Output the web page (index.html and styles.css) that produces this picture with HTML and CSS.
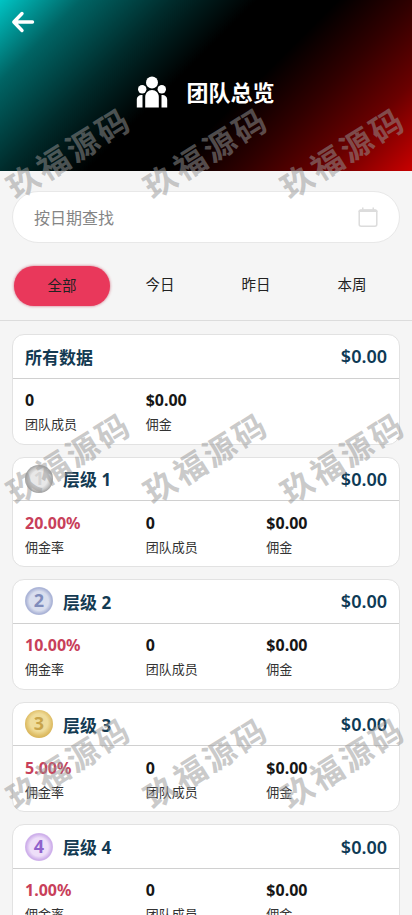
FILE: index.html
```html
<!DOCTYPE html>
<html lang="en">
<head>
    <meta charset="UTF-8">
    <meta name="viewport" content="width=device-width, initial-scale=1.0">
    <title>团队总览</title>
    <link rel="stylesheet" href="styles.css">
</head>
<body>
    <header class="top-header">
        <div class="back-btn">
            <svg width="24" height="24" viewBox="0 0 24 24" fill="none" stroke="#fff" stroke-width="3.4" stroke-linecap="round" stroke-linejoin="round">
                <path d="M21.5 12H3M11 3.5 2.8 12l8.2 8.5"/>
            </svg>
        </div>
        <div class="header-title">
            <svg class="team-icon" width="32" height="32" viewBox="0 0 32 32" fill="#fff">
                <circle cx="16" cy="6.5" r="6"/>
                <circle cx="6.2" cy="13.2" r="4.2"/>
                <circle cx="25.8" cy="13.2" r="4.2"/>
                <path d="M9.2 31.5V21c0-4 3-7 6.8-7s6.800 3 6.800 7v10.500z"/>
                <path d="M.8 31.500V24c0-3 1.600-5 5.700-5v12.500zM31.200 31.500V24c0-3-1.600-5-5.700-5v12.500z"/>
            </svg>
            <h1>团队总览</h1>
        </div>
    </header>

    <section class="search-wrap">
        <div class="search-box">
            <span class="search-text">按日期查找</span>
            <svg width="20" height="20" viewBox="0 0 20 20">
                <path d="M4 .5h1.500v2h9v-2H16v2h1.500a2 2 0 0 1 2 2V5H.5v-.5a2 2 0 0 1 2-2H4z" fill="#dcdcdc"/>
                <rect x="1.200" y="3" width="17.600" height="16.200" rx="2" fill="none" stroke="#dcdcdc" stroke-width="1.500"/>
            </svg>
        </div>
    </section>

    <nav class="tabs">
        <div class="tab active">全部</div>
        <div class="tab">今日</div>
        <div class="tab">昨日</div>
        <div class="tab">本周</div>
    </nav>

    <main class="card-list">
        <div class="card">
            <div class="card-head">
                <span class="card-name">所有数据</span>
                <span class="card-total">$0.00</span>
            </div>
            <div class="card-stats">
                <div class="stat"><b>0</b><span>团队成员</span></div>
                <div class="stat"><b>$0.00</b><span>佣金</span></div>
            </div>
        </div>

        <div class="card">
            <div class="card-head">
                <span class="medal medal-1">1</span>
                <span class="card-name">层级 1</span>
                <span class="card-total">$0.00</span>
            </div>
            <div class="card-stats">
                <div class="stat"><b class="rate">20.00%</b><span>佣金率</span></div>
                <div class="stat"><b>0</b><span>团队成员</span></div>
                <div class="stat"><b>$0.00</b><span>佣金</span></div>
            </div>
        </div>

        <div class="card">
            <div class="card-head">
                <span class="medal medal-2">2</span>
                <span class="card-name">层级 2</span>
                <span class="card-total">$0.00</span>
            </div>
            <div class="card-stats">
                <div class="stat"><b class="rate">10.00%</b><span>佣金率</span></div>
                <div class="stat"><b>0</b><span>团队成员</span></div>
                <div class="stat"><b>$0.00</b><span>佣金</span></div>
            </div>
        </div>

        <div class="card">
            <div class="card-head">
                <span class="medal medal-3">3</span>
                <span class="card-name">层级 3</span>
                <span class="card-total">$0.00</span>
            </div>
            <div class="card-stats">
                <div class="stat"><b class="rate">5.00%</b><span>佣金率</span></div>
                <div class="stat"><b>0</b><span>团队成员</span></div>
                <div class="stat"><b>$0.00</b><span>佣金</span></div>
            </div>
        </div>

        <div class="card">
            <div class="card-head">
                <span class="medal medal-4">4</span>
                <span class="card-name">层级 4</span>
                <span class="card-total">$0.00</span>
            </div>
            <div class="card-stats">
                <div class="stat"><b class="rate">1.00%</b><span>佣金率</span></div>
                <div class="stat"><b>0</b><span>团队成员</span></div>
                <div class="stat"><b>$0.00</b><span>佣金</span></div>
            </div>
        </div>
    </main>

    <div class="watermarks">
        <span>玖福源码</span><span>玖福源码</span><span>玖福源码</span>
        <span>玖福源码</span><span>玖福源码</span><span>玖福源码</span>
        <span>玖福源码</span><span>玖福源码</span><span>玖福源码</span>
    </div>
</body>
</html>
```

FILE: styles.css
```css
* {
    margin: 0;
    padding: 0;
    box-sizing: border-box;
}

html, body {
    height: 915px;
    overflow: hidden;
}

body {
    position: relative;
    font-family: "Noto Sans", "Noto Sans CJK SC", sans-serif;
    background: #f5f5f5;
    color: #222;
}

.top-header {
    height: 171px;
    padding: 10px 11px 0;
    background: linear-gradient(135deg, #00c4c4 0%, #006464 14%, #002a2a 30%, #000 44%, #000 58%, #300000 71%, #6a0000 85%, #c80000 100%);
}

.back-btn {
    height: 24px;
}

.header-title {
    display: flex;
    align-items: center;
    justify-content: center;
    gap: 18px;
    margin-top: 42px;
    padding-right: 1px;
    color: #fff;
}

.header-title h1 {
    font-size: 22px;
    font-weight: 700;
    line-height: 32px;
}

.search-wrap {
    padding: 20px 12px 0;
}

.search-box {
    display: flex;
    align-items: center;
    justify-content: space-between;
    height: 52px;
    padding: 0 21px 0 21px;
    background: #fff;
    border: 1px solid #e8e8e8;
    border-radius: 26px;
}

.search-text {
    font-size: 16px;
    color: #858585;
}

.tabs {
    display: flex;
    height: 55px;
    margin-top: 23px;
    padding: 0 12px 0 14px;
    border-bottom: 1px solid #dcdcdc;
}

.tab {
    width: 96px;
    height: 40px;
    padding-bottom: 4px;
    font-size: 14.5px;
    line-height: 36px;
    text-align: center;
    color: #222;
}

.tab.active {
    margin-right: 2px;
    padding: 0;
    line-height: 39px;
    background: #e9385b;
    border-radius: 20px;
    box-shadow: 0 0 3px rgba(190, 40, 70, 0.7);
}

.card-list {
    padding: 13px 12px 0;
}

.card {
    height: 110.6px;
    margin-bottom: 12px;
    background: #fff;
    border: 1px solid #e2e2e2;
    border-radius: 12px;
}

.card-head {
    display: flex;
    align-items: center;
    height: 43.500px;
    padding: 0 12px;
    border-bottom: 1px solid #d0d0d0;
}

.card-name {
    flex: 1;
    font-size: 17px;
    font-weight: 700;
    color: #133a52;
}

.card-total {
    font-size: 18px;
    font-weight: 600;
    color: #0e3a55;
}

.card-stats {
    display: grid;
    grid-template-columns: repeat(3, 1fr);
    padding: 10.500px 12px 0;
}

.stat b {
    display: block;
    font-size: 16px;
    font-weight: 700;
    line-height: 22px;
    color: #161616;
}

.stat b.rate {
    color: #c8405a;
}

.stat span {
    display: block;
    margin-top: 2px;
    font-size: 13px;
    line-height: 22px;
    color: #333;
}

.medal {
    flex: none;
    width: 28px;
    height: 28px;
    margin-right: 10px;
    border-radius: 50%;
    font-size: 18px;
    font-weight: 700;
    line-height: 27px;
    text-align: center;
}

.medal-1 {
    background: radial-gradient(circle, #e8e8e8 0 42%, #c6c6c6 58%, #8e8e8e 76%, #b5b5b5 90%, #d8d8d8 100%);
    color: #d4d4d4;
}

.medal-2 {
    background: radial-gradient(circle, #d9deee 0 48%, #aab3d6 66%, #c9cfe6 80%, #aeb8d8 92%, #e4e7f3 100%);
    color: #7f8cbb;
}

.medal-3 {
    background: radial-gradient(circle at 50% 45%, #efdc9a 0 42%, #e0c06a 62%, #cfa848 84%, #e8d28a 100%);
    color: #c8a44a;
}

.medal-4 {
    background: radial-gradient(circle, #eedff9 0 46%, #cdaeea 66%, #e6d3f6 80%, #c9a5ea 90%, #f3e6fb 100%);
    color: #8f62cc;
}

/* watermark sits over the whole page */
.watermarks {
    position: absolute;
    inset: 0;
    display: grid;
    grid-template-columns: repeat(3, minmax(0, 1fr));
    grid-template-rows: repeat(3, 305px);
    overflow: hidden;
    pointer-events: none;
}

.watermarks span {
    justify-self: center;
    align-self: start;
    margin-top: 135px;
    font-size: 32px;
    font-weight: 700;
    letter-spacing: 3px;
    line-height: 36px;
    white-space: nowrap;
    color: rgba(150, 150, 150, 0.5);
    transform: rotate(-32deg);
}
```
